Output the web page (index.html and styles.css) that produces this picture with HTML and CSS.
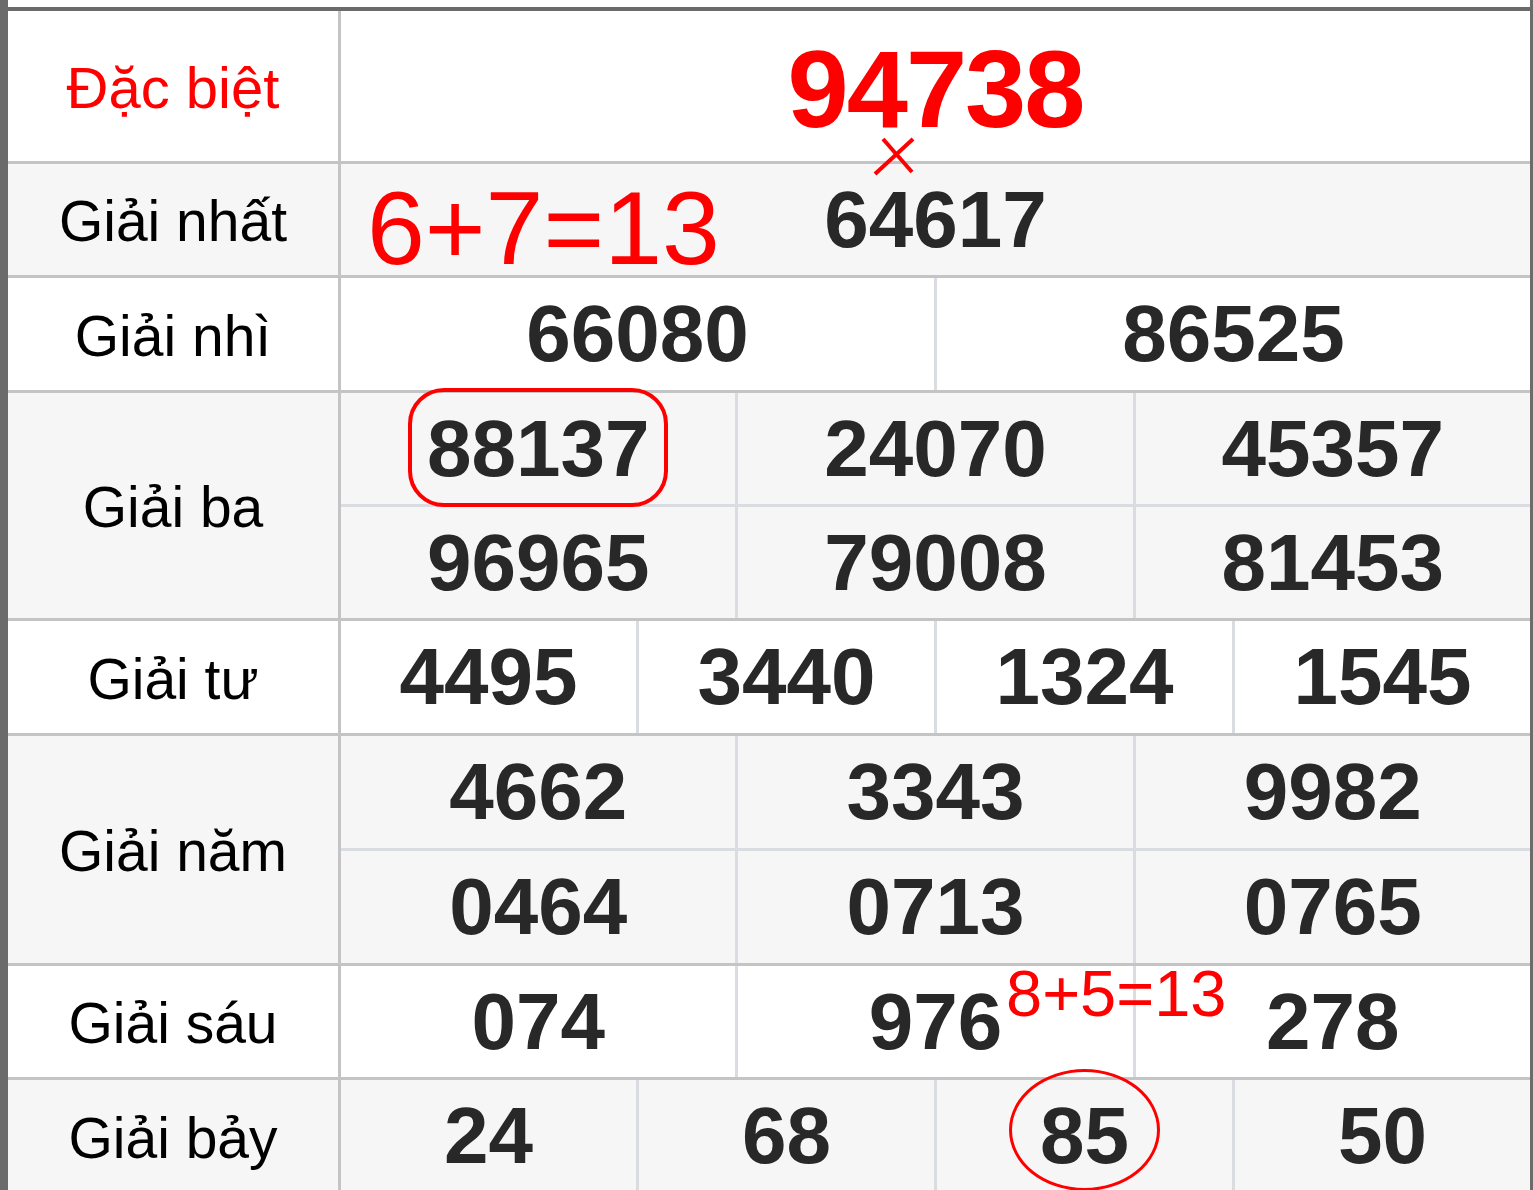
FILE: index.html
```html
<!DOCTYPE html>
<html lang="vi">
<head>
<meta charset="utf-8">
<title>Kết quả xổ số</title>
<link rel="stylesheet" href="styles.css">
</head>
<body>
<div class="sheet">
  <div class="table">
    <div class="row row-db bg-white">
      <div class="label label-red">Đặc biệt</div>
      <div class="cells cols-1">
        <div class="cell"><span class="num num-special">94738</span></div>
      </div>
      <svg class="cross" width="48" height="42" viewBox="0 0 48 42" aria-hidden="true">
        <line x1="13" y1="4" x2="42" y2="37" stroke="#ff0000" stroke-width="4"/>
        <line x1="43" y1="4" x2="5" y2="39" stroke="#ff0000" stroke-width="4"/>
      </svg>
    </div>
    <div class="row row-1 bg-grey">
      <div class="label">Giải nhất</div>
      <div class="cells cols-1">
        <div class="cell"><span class="num">64617</span></div>
      </div>
      <span class="note note-big">6+7=13</span>
    </div>
    <div class="row row-1b bg-white">
      <div class="label">Giải nhì</div>
      <div class="cells cols-2">
        <div class="cell"><span class="num">66080</span></div>
        <div class="cell"><span class="num">86525</span></div>
      </div>
    </div>
    <div class="row row-ba bg-grey">
      <div class="label">Giải ba</div>
      <div class="cells cols-3 rows-2a">
        <div class="cell"><span class="num">88137</span></div>
        <div class="cell"><span class="num">24070</span></div>
        <div class="cell"><span class="num">45357</span></div>
        <div class="cell"><span class="num">96965</span></div>
        <div class="cell"><span class="num">79008</span></div>
        <div class="cell"><span class="num">81453</span></div>
      </div>
      <span class="mark-rect"></span>
    </div>
    <div class="row row-1b bg-white">
      <div class="label">Giải tư</div>
      <div class="cells cols-4">
        <div class="cell"><span class="num">4495</span></div>
        <div class="cell"><span class="num">3440</span></div>
        <div class="cell"><span class="num">1324</span></div>
        <div class="cell"><span class="num">1545</span></div>
      </div>
    </div>
    <div class="row row-nam bg-grey">
      <div class="label">Giải năm</div>
      <div class="cells cols-3 rows-2b">
        <div class="cell"><span class="num">4662</span></div>
        <div class="cell"><span class="num">3343</span></div>
        <div class="cell"><span class="num">9982</span></div>
        <div class="cell"><span class="num">0464</span></div>
        <div class="cell"><span class="num">0713</span></div>
        <div class="cell"><span class="num">0765</span></div>
      </div>
    </div>
    <div class="row row-1 bg-white">
      <div class="label">Giải sáu</div>
      <div class="cells cols-3">
        <div class="cell"><span class="num">074</span></div>
        <div class="cell"><span class="num">976</span></div>
        <div class="cell"><span class="num">278</span></div>
      </div>
      <span class="note note-small">8+5=13</span>
    </div>
    <div class="row row-last bg-grey">
      <div class="label">Giải bảy</div>
      <div class="cells cols-4">
        <div class="cell"><span class="num">24</span></div>
        <div class="cell"><span class="num">68</span></div>
        <div class="cell"><span class="num">85</span></div>
        <div class="cell"><span class="num">50</span></div>
      </div>
      <span class="mark-oval"></span>
    </div>
  </div>
</div>
</body>
</html>
```

FILE: styles.css
```css
html, body {
  margin: 0;
  padding: 0;
  overflow: hidden;
  background: #ffffff;
}

.sheet {
  box-sizing: border-box;
  width: 1533px;
  height: 1190px;
  padding-top: 7px;
  border-left: 8px solid #6b6b6b;
  border-right: 3px solid #6b6b6b;
  font-family: "Liberation Sans", Arial, "Helvetica Neue", sans-serif;
  overflow: hidden;
}

.table {
  border-top: 4px solid #6b6b6b;
}

.row {
  position: relative;
  display: grid;
  grid-template-columns: 333px 1fr;
  border-bottom: 3px solid #c4c4c4;
}

.bg-white { background: #ffffff; }
.bg-grey { background: #f6f6f6; }

.row-db { height: 150px; }
.row-1 { height: 111px; }
.row-1b { height: 112px; }
.row-ba { height: 225px; }
.row-nam { height: 227px; }
.row-last { height: 112px; border-bottom: none; }

.label {
  display: flex;
  align-items: center;
  justify-content: center;
  border-right: 3px solid #c4c4c4;
  font-size: 57px;
  color: #000000;
  line-height: 1;
  padding-top: 4px;
}

.label-red {
  color: #ff0000;
  font-size: 58px;
}

.cells {
  display: grid;
  gap: 3px;
  background: #d9dce1;
  height: 100%;
}

.cols-1 { grid-template-columns: 1fr; }
.cols-2 { grid-template-columns: repeat(2, 1fr); }
.cols-3 { grid-template-columns: repeat(3, 1fr); }
.cols-4 { grid-template-columns: repeat(4, 1fr); }
.rows-2a { grid-template-rows: 111px 111px; }
.rows-2b { grid-template-rows: 112px 112px; }

.bg-white .cell { background: #ffffff; }
.bg-grey .cell { background: #f6f6f6; }

.cell {
  display: flex;
  align-items: center;
  justify-content: center;
}

.num {
  font-weight: bold;
  font-size: 80px;
  line-height: 1;
  color: #282828;
}

.num-special {
  font-size: 110px;
  color: #ff0000;
  letter-spacing: -2px;
  margin-top: 6px;
}

.cross {
  position: absolute;
  left: 862px;
  top: 124px;
  z-index: 3;
}

.note {
  position: absolute;
  z-index: 3;
  color: #ff0000;
  line-height: 1;
  white-space: nowrap;
}

.note-big {
  left: 359px;
  top: 12px;
  font-size: 104px;
}

.note-small {
  left: 998px;
  top: -5px;
  font-size: 65px;
}

.mark-rect {
  position: absolute;
  z-index: 3;
  left: 400px;
  top: -5px;
  width: 260px;
  height: 119px;
  box-sizing: border-box;
  border: 4px solid #ff0000;
  border-radius: 36px;
}

.mark-oval {
  position: absolute;
  z-index: 3;
  left: 1001px;
  top: -11px;
  width: 151px;
  height: 122px;
  box-sizing: border-box;
  border: 3.5px solid #ff0000;
  border-radius: 50%;
}
```
